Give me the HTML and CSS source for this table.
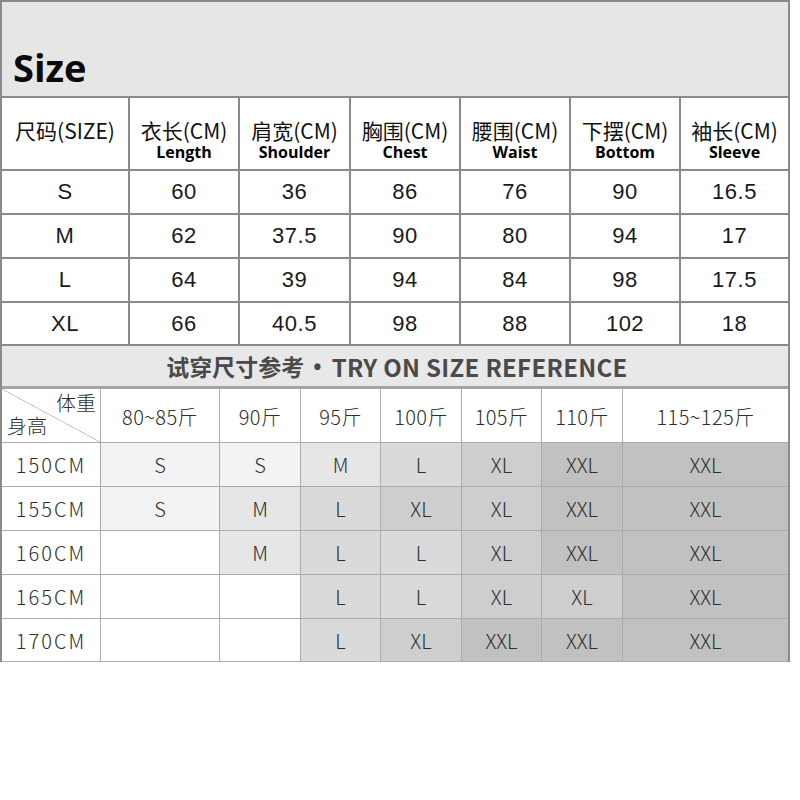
FILE: index.html
```html
<!DOCTYPE html>
<html lang="zh">
<head>
<meta charset="utf-8">
<title>Size</title>
<link rel="stylesheet" href="styles.css">
</head>
<body>
<div class="sheet">
  <div class="size-block">
    <div class="size-title">Size</div>

    <div class="hcell"><span class="zh">尺码(SIZE)</span></div>
    <div class="hcell"><span class="zh">衣长(CM)</span><span class="en">Length</span></div>
    <div class="hcell"><span class="zh">肩宽(CM)</span><span class="en">Shoulder</span></div>
    <div class="hcell"><span class="zh">胸围(CM)</span><span class="en">Chest</span></div>
    <div class="hcell"><span class="zh">腰围(CM)</span><span class="en">Waist</span></div>
    <div class="hcell"><span class="zh">下摆(CM)</span><span class="en">Bottom</span></div>
    <div class="hcell"><span class="zh">袖长(CM)</span><span class="en">Sleeve</span></div>

    <div class="dcell">S</div><div class="dcell">60</div><div class="dcell">36</div><div class="dcell">86</div><div class="dcell">76</div><div class="dcell">90</div><div class="dcell">16.5</div>
    <div class="dcell">M</div><div class="dcell">62</div><div class="dcell">37.5</div><div class="dcell">90</div><div class="dcell">80</div><div class="dcell">94</div><div class="dcell">17</div>
    <div class="dcell">L</div><div class="dcell">64</div><div class="dcell">39</div><div class="dcell">94</div><div class="dcell">84</div><div class="dcell">98</div><div class="dcell">17.5</div>
    <div class="dcell">XL</div><div class="dcell">66</div><div class="dcell">40.5</div><div class="dcell">98</div><div class="dcell">88</div><div class="dcell">102</div><div class="dcell">18</div>
  </div>

  <div class="try-block">
    <div class="try-title"><span class="t-zh">试穿尺寸参考</span><span class="t-dot">•</span><span class="t-en">TRY ON SIZE REFERENCE</span></div>
    <div class="try-grid">
      <div class="tcell corner"><span class="c-weight">体重</span><span class="c-height">身高</span></div>
      <div class="tcell head">80~85斤</div>
      <div class="tcell head">90斤</div>
      <div class="tcell head">95斤</div>
      <div class="tcell head">100斤</div>
      <div class="tcell head">105斤</div>
      <div class="tcell head">110斤</div>
      <div class="tcell head">115~125斤</div>

      <div class="tcell hgt">150CM</div>
      <div class="tcell s">S</div><div class="tcell s">S</div><div class="tcell m">M</div><div class="tcell l">L</div><div class="tcell xl">XL</div><div class="tcell xxl">XXL</div><div class="tcell xxl">XXL</div>

      <div class="tcell hgt">155CM</div>
      <div class="tcell s">S</div><div class="tcell m">M</div><div class="tcell l">L</div><div class="tcell xl">XL</div><div class="tcell xl">XL</div><div class="tcell xxl">XXL</div><div class="tcell xxl">XXL</div>

      <div class="tcell hgt">160CM</div>
      <div class="tcell"></div><div class="tcell m">M</div><div class="tcell l">L</div><div class="tcell l">L</div><div class="tcell xl">XL</div><div class="tcell xxl">XXL</div><div class="tcell xxl">XXL</div>

      <div class="tcell hgt">165CM</div>
      <div class="tcell"></div><div class="tcell"></div><div class="tcell l">L</div><div class="tcell l">L</div><div class="tcell xl">XL</div><div class="tcell xl">XL</div><div class="tcell xxl">XXL</div>

      <div class="tcell hgt">170CM</div>
      <div class="tcell"></div><div class="tcell"></div><div class="tcell l">L</div><div class="tcell xl">XL</div><div class="tcell xxl">XXL</div><div class="tcell xxl">XXL</div><div class="tcell xxl">XXL</div>
    </div>
  </div>
</div>
</body>
</html>
```

FILE: styles.css
```css
html, body {
  margin: 0;
  padding: 0;
  background: #ffffff;
}

.sheet {
  width: 790px;
}

/* ---------- size table ---------- */
.size-block {
  display: grid;
  grid-template-columns: 126px 108px 109px 108px 108px 108px 107px;
  grid-template-rows: 94px 71px 42px 42px 42px 41px;
  gap: 2px;
  padding: 2px;
  background: #8a8a8a;
}

.size-title {
  grid-column: 1 / -1;
  background: #e6e6e6;
  font-family: "Open Sans", "Noto Sans", sans-serif;
  font-weight: 700;
  font-size: 38px;
  line-height: 38px;
  color: #0a0a0a;
  padding: 46px 0 0 11px;
}

.hcell {
  background: #ffffff;
  display: flex;
  flex-direction: column;
  align-items: center;
  padding-top: 20px;
  color: #111111;
}

.hcell .zh {
  font-family: "Noto Sans CJK SC", "Noto Sans", sans-serif;
  font-size: 21px;
  line-height: 24px;
  white-space: nowrap;
}

.hcell .en {
  font-family: "Open Sans", "Noto Sans", sans-serif;
  font-weight: 700;
  font-size: 16px;
  line-height: 18px;
  margin-top: 1px;
  color: #000000;
}

.dcell {
  background: #ffffff;
  display: flex;
  align-items: center;
  justify-content: center;
  font-family: "Liberation Sans", Arial, sans-serif;
  font-size: 22px;
  letter-spacing: 0.5px;
  color: #1a1a1a;
}

/* ---------- try-on table ---------- */
.try-block {
  border-left: 2px solid #8a8a8a;
  border-right: 2px solid #8a8a8a;
}

.try-title {
  height: 40px;
  background: #e8e8e8;
  border-bottom: 3px solid #a4a4a4;
  display: flex;
  align-items: center;
  justify-content: center;
  font-family: "Noto Sans CJK SC", "Noto Sans", sans-serif;
  font-weight: 700;
  font-size: 23px;
  color: #4a4a4a;
  padding-left: 4px;
}

.t-dot {
  font-family: "Open Sans", "Noto Sans", sans-serif;
  font-size: 22px;
  margin: 0 10px 0 9px;
}

.t-en {
  font-size: 24px;
  letter-spacing: 0.3px;
}

.try-grid {
  display: grid;
  grid-template-columns: 98px 118px 80px 79px 80px 79px 80px 165px;
  grid-template-rows: 53px 43px 43px 43px 43px 42px;
  gap: 1px;
  padding-bottom: 1px;
  background: #ababab;
}

.tcell {
  background: #ffffff;
  display: flex;
  align-items: center;
  justify-content: center;
  font-family: "Noto Sans CJK SC", "Noto Sans", sans-serif;
  font-weight: 300;
  font-size: 20px;
  color: #2e2e2e;
}

.tcell.head {
  letter-spacing: 0.4px;
  padding-top: 2px;
}

.tcell.hgt {
  letter-spacing: 2px;
  font-size: 20px;
}

.tcell.s { background: #f3f3f3; }
.tcell.m { background: #e6e6e6; }
.tcell.l { background: #dadada; }
.tcell.xl { background: #cecece; }
.tcell.xxl { background: #c1c1c1; }

.tcell.corner {
  display: block;
  position: relative;
  background: linear-gradient(to top right, #ffffff calc(50% - 0.7px), #b4b4b4 50%, #ffffff calc(50% + 0.7px));
}

.c-weight {
  position: absolute;
  right: 4px;
  top: 1px;
  font-size: 20px;
  line-height: 26px;
}

.c-height {
  position: absolute;
  left: 5px;
  bottom: 3px;
  font-size: 20px;
  line-height: 26px;
}
```
